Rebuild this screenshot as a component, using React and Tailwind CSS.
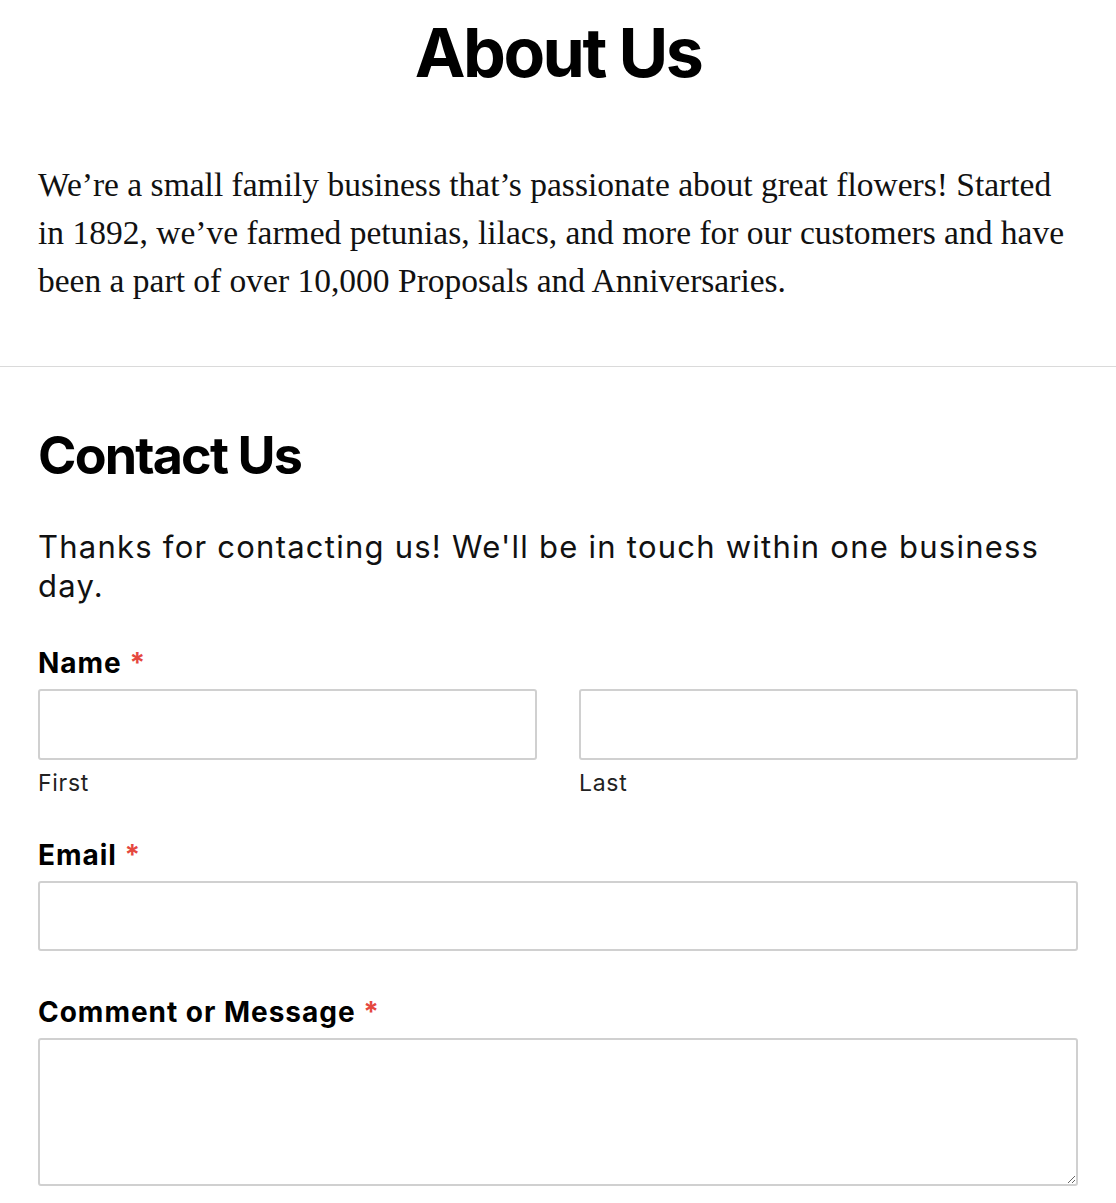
export default function App() {
  const sans = { fontFamily: 'Inter, "Noto Sans", sans-serif' };
  return (
    <div className="min-h-[1203px] bg-white text-black" style={sans}>
      <section className="px-[38px] pt-[14px] pb-[61px]">
        <h1 className="text-center text-[68px] font-bold leading-[76px] tracking-[-0.037em]">About Us</h1>
        <p
          className="mt-[71px] text-[33.5px] leading-[48px] text-[#111]"
          style={{ fontFamily: '"Liberation Serif", "Times New Roman", serif' }}
        >
          <span className="whitespace-nowrap">We’re a small family business that’s passionate about great flowers! Started</span>
          <br />
          <span className="whitespace-nowrap">in 1892, we’ve farmed petunias, lilacs, and more for our customers and have</span>
          <br />
          <span className="whitespace-nowrap">been a part of over 10,000 Proposals and Anniversaries.</span>
        </p>
      </section>
      <hr className="border-0 border-t border-[#dadada]" />
      <section className="px-[38px] pt-[59px]">
        <h2 className="text-[52px] font-bold leading-[60px] tracking-[-0.035em]">Contact Us</h2>
        <p className="mt-[41px] text-[31px] leading-[39px] tracking-[0.04em] text-[#111]">
          Thanks for contacting us! We'll be in touch within one business
          <br />
          day.
        </p>
        <form className="mt-[41px]">
          <div>
            <label className="block text-[28px] font-bold leading-[34px] tracking-[0.035em]">
              Name <span className="text-[#e5483f]">*</span>
            </label>
            <div className="mt-[9px] grid grid-cols-2 gap-[42px]">
              <div>
                <input className="block h-[71px] w-full rounded-[3px] border-2 border-[#d0d0d0] bg-white" />
                <div className="mt-[9px] text-[23px] leading-[28px] tracking-[0.03em] text-[#222]">First</div>
              </div>
              <div>
                <input className="block h-[71px] w-full rounded-[3px] border-2 border-[#d0d0d0] bg-white" />
                <div className="mt-[9px] text-[23px] leading-[28px] tracking-[0.03em] text-[#222]">Last</div>
              </div>
            </div>
          </div>
          <div className="mt-[41px]">
            <label className="block text-[28px] font-bold leading-[34px] tracking-[0.035em]">
              Email <span className="text-[#e5483f]">*</span>
            </label>
            <input className="mt-[9px] block h-[70px] w-full rounded-[3px] border-2 border-[#d0d0d0] bg-white" />
          </div>
          <div className="mt-[44px]">
            <label className="block text-[28px] font-bold leading-[34px] tracking-[0.035em]">
              Comment or Message <span className="text-[#e5483f]">*</span>
            </label>
            <textarea className="mt-[9px] block h-[148px] w-full rounded-[3px] border-2 border-[#d0d0d0] bg-white" />
          </div>
        </form>
      </section>
    </div>
  );
}
